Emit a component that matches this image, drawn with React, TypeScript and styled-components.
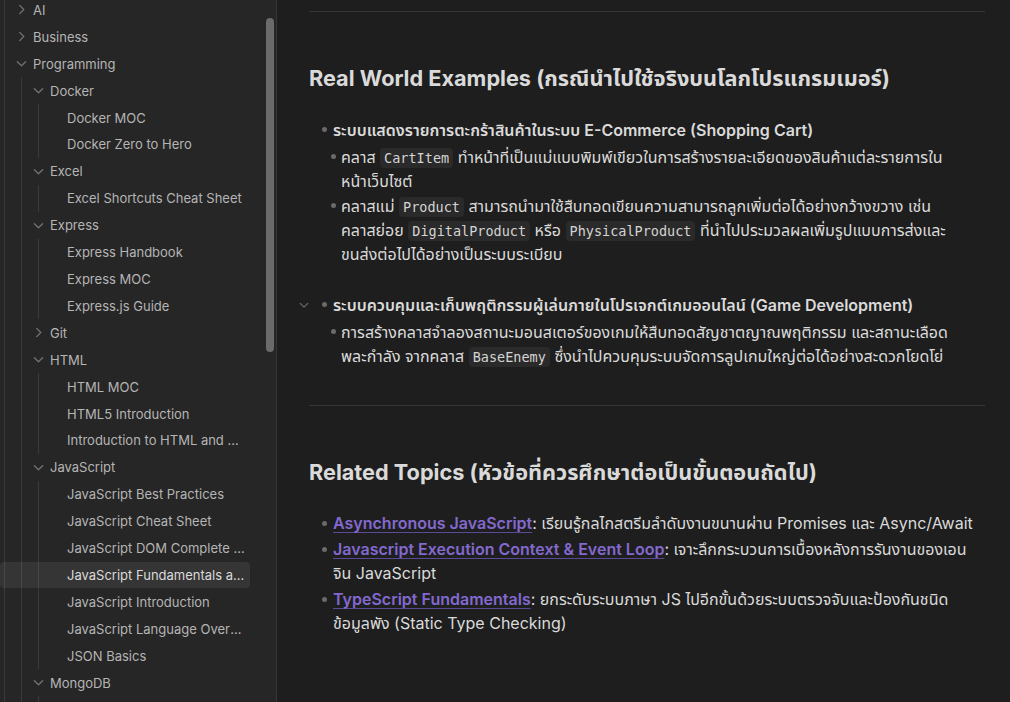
import React from "react";
import styled, { createGlobalStyle } from "styled-components";

const GlobalStyle = createGlobalStyle`
  * { box-sizing: border-box; }
  html, body, #root { margin: 0; height: 100%; }
  body {
    background: #1e1e1e;
    font-family: Inter, "Noto Sans Thai", "Noto Sans", "DejaVu Sans", sans-serif;
    -webkit-font-smoothing: antialiased;
  }
`;

const Layout = styled.div`
  display: flex;
  height: 702px;
  overflow: hidden;
`;

/* ---------- sidebar ---------- */

const Sidebar = styled.aside`
  position: relative;
  width: 277px;
  flex-shrink: 0;
  background: #262626;
  border-right: 1px solid #363636;
  overflow: hidden;
`;

const Tree = styled.div`
  margin-top: -3.5px;
  padding-right: 26px;
`;

const Group = styled.div<{ $root?: boolean }>`
  margin-left: ${(p) => (p.$root ? 4 : 16)}px;
  border-left: 1px solid #3a3a3a;
`;

const Row = styled.div<{ $active?: boolean; $pull: number }>`
  display: flex;
  align-items: center;
  gap: 5px;
  height: 26.92px;
  margin-left: -${(p) => p.$pull}px;
  padding: 0 4px 0 ${(p) => 9 + p.$pull}px;
  border-radius: 4px;
  font-size: 13px;
  white-space: nowrap;
  color: ${(p) => (p.$active ? "#dadada" : "#b5b5b5")};
  background: ${(p) => (p.$active ? "rgba(255, 255, 255, 0.07)" : "transparent")};
`;

const ChevronSlot = styled.span`
  width: 14px;
  flex-shrink: 0;
  display: flex;
  justify-content: center;
  align-items: center;
`;

const Chevron = styled.svg<{ $open?: boolean }>`
  width: 11px;
  height: 11px;
  color: #707070;
  transform: rotate(${(p) => (p.$open ? 0 : -90)}deg);
`;

const Label = styled.span`
  flex: 1;
  min-width: 0;
  overflow: hidden;
  text-overflow: ellipsis;
`;

const ScrollThumb = styled.div`
  position: absolute;
  top: 18px;
  right: 2px;
  width: 8px;
  height: 334px;
  border-radius: 4px;
  background: #6b6b6b;
`;

type TreeNode = { name: string; open?: boolean; active?: boolean; children?: TreeNode[] };

const tree: TreeNode[] = [
  { name: "AI", children: [] },
  { name: "Business", children: [] },
  {
    name: "Programming",
    open: true,
    children: [
      { name: "Docker", open: true, children: [{ name: "Docker MOC" }, { name: "Docker Zero to Hero" }] },
      { name: "Excel", open: true, children: [{ name: "Excel Shortcuts Cheat Sheet" }] },
      {
        name: "Express",
        open: true,
        children: [{ name: "Express Handbook" }, { name: "Express MOC" }, { name: "Express.js Guide" }],
      },
      { name: "Git", children: [] },
      {
        name: "HTML",
        open: true,
        children: [
          { name: "HTML MOC" },
          { name: "HTML5 Introduction" },
          { name: "Introduction to HTML and CSS Basics" },
        ],
      },
      {
        name: "JavaScript",
        open: true,
        children: [
          { name: "JavaScript Best Practices" },
          { name: "JavaScript Cheat Sheet" },
          { name: "JavaScript DOM Complete Guide" },
          { name: "JavaScript Fundamentals and OOP", active: true },
          { name: "JavaScript Introduction" },
          { name: "JavaScript Language Overview" },
          { name: "JSON Basics" },
        ],
      },
      { name: "MongoDB", open: true, children: [{ name: "MongoDB Basics" }, { name: "MongoDB MOC" }] },
    ],
  },
];

function ChevronIcon({ open }: { open?: boolean }) {
  return (
    <Chevron $open={open} viewBox="0 0 24 24" fill="none" stroke="currentColor" strokeWidth={3} strokeLinecap="round" strokeLinejoin="round">
      <path d="M3 8L12 17L21 8" />
    </Chevron>
  );
}

function TreeItem({ node, depth }: { node: TreeNode; depth: number }) {
  const isFolder = !!node.children;
  return (
    <>
      <Row $active={node.active} $pull={node.active ? 5 + depth * 17 : 0}>
        <ChevronSlot>{isFolder && <ChevronIcon open={node.open} />}</ChevronSlot>
        <Label>{node.name}</Label>
      </Row>
      {isFolder && node.open && node.children!.length > 0 && (
        <Group>
          {node.children!.map((c) => (
            <TreeItem key={c.name} node={c} depth={depth + 1} />
          ))}
        </Group>
      )}
    </>
  );
}

/* ---------- note ---------- */

const Main = styled.main`
  flex: 1;
  min-width: 0;
  padding: 0 25px 0 32px;
  color: #dadada;
  font-size: 16px;
  line-height: 24px;
`;

const Rule = styled.hr<{ $top: number }>`
  border: none;
  border-top: 1px solid #363636;
  margin: ${(p) => p.$top}px 0 0;
`;

const Heading = styled.h2`
  margin: 52px 0 25px;
  font-size: 21.7px;
  font-weight: 700;
  line-height: 28.6px;
  color: #dadada;
`;

const List = styled.ul<{ $gap: number }>`
  list-style: none;
  margin: 0;
  padding: 0;
  display: flex;
  flex-direction: column;
  gap: ${(p) => p.$gap}px;
`;

const Item = styled.li`
  display: grid;
  grid-template-columns: 36px 1fr;
  margin-left: -12px;
`;

const Marker = styled.div`
  height: 24px;
  display: flex;
  align-items: center;
  justify-content: space-between;
  padding: 0 6px 0 2px;
`;

const Fold = styled.svg`
  width: 10px;
  height: 10px;
  color: #6a6a6a;
`;

const Dot = styled.span<{ $center?: boolean }>`
  width: 5px;
  height: 5px;
  margin-left: ${(p) => (p.$center ? 0 : "auto")};
  border-radius: 50%;
  background: #6a6a6a;
`;

const ItemTitle = styled.div<{ $strong?: boolean }>`
  font-weight: ${(p) => (p.$strong ? 600 : 400)};
`;

const SubList = styled.ul`
  list-style: none;
  margin: 3px 0 0 -8px;
  padding: 0;
  display: flex;
  flex-direction: column;
  gap: 1px;
`;

const SubItem = styled.li`
  display: grid;
  grid-template-columns: 16px 1fr;
`;

const SubMarker = styled.div`
  height: 24px;
  display: flex;
  align-items: center;
  justify-content: center;
`;

const Code = styled.code`
  font-family: "DejaVu Sans Mono", "Liberation Mono", monospace;
  font-size: 13.5px;
  line-height: 1;
  color: #d4d4d4;
  background: #2a2a2a;
  border-radius: 4px;
  padding: 2px 4px;
`;

const NoteLink = styled.a`
  color: #8369cf;
  font-weight: 600;
  text-decoration: underline;
  text-decoration-color: #5b4a96;
  text-underline-offset: 3px;
`;

function Bullet({ fold }: { fold?: boolean }) {
  return (
    <Marker>
      {fold && (
        <Fold viewBox="0 0 24 24" fill="none" stroke="currentColor" strokeWidth={3} strokeLinecap="round" strokeLinejoin="round">
          <path d="M3 8L12 17L21 8" />
        </Fold>
      )}
      <Dot />
    </Marker>
  );
}

function Sub({ children }: { children: React.ReactNode }) {
  return (
    <SubItem>
      <SubMarker>
        <Dot $center />
      </SubMarker>
      <div>{children}</div>
    </SubItem>
  );
}

export default function App() {
  return (
    <>
      <GlobalStyle />
      <Layout>
        <Sidebar>
          <Tree>
            <Group $root>
              {tree.map((n) => (
                <TreeItem key={n.name} node={n} depth={0} />
              ))}
            </Group>
          </Tree>
          <ScrollThumb />
        </Sidebar>

        <Main>
          <Rule $top={11} />
          <Heading>Real World Examples (กรณีนำไปใช้จริงบนโลกโปรแกรมเมอร์)</Heading>
          <List $gap={27}>
            <Item>
              <Bullet />
              <div>
                <ItemTitle $strong>ระบบแสดงรายการตะกร้าสินค้าในระบบ E-Commerce (Shopping Cart)</ItemTitle>
                <SubList>
                  <Sub>
                    {"คลาส "}<Code>CartItem</Code>{" ทำหน้าที่เป็นแม่แบบพิมพ์เขียวในการสร้างรายละเอียดของสินค้าแต่ละรายการใน"}
                    <br />
                    {"หน้าเว็บไซต์"}
                  </Sub>
                  <Sub>
                    {"คลาสแม่ "}<Code>Product</Code>{" สามารถนำมาใช้สืบทอดเขียนความสามารถลูกเพิ่มต่อได้อย่างกว้างขวาง เช่น"}
                    <br />
                    {"คลาสย่อย "}<Code>DigitalProduct</Code>{" หรือ "}<Code>PhysicalProduct</Code>
                    {" ที่นำไปประมวลผลเพิ่มรูปแบบการส่งและ"}
                    <br />
                    {"ขนส่งต่อไปได้อย่างเป็นระบบระเบียบ"}
                  </Sub>
                </SubList>
              </div>
            </Item>
            <Item>
              <Bullet fold />
              <div>
                <ItemTitle $strong>ระบบควบคุมและเก็บพฤติกรรมผู้เล่นภายในโปรเจกต์เกมออนไลน์ (Game Development)</ItemTitle>
                <SubList>
                  <Sub>
                    {"การสร้างคลาสจำลองสถานะมอนสเตอร์ของเกมให้สืบทอดสัญชาตญาณพฤติกรรม และสถานะเลือด"}
                    <br />
                    {"พละกำลัง จากคลาส "}<Code>BaseEnemy</Code>{" ซึ่งนำไปควบคุมระบบจัดการลูปเกมใหญ่ต่อได้อย่างสะดวกโยดโย่"}
                  </Sub>
                </SubList>
              </div>
            </Item>
          </List>

          <Rule $top={37} />
          <Heading>Related Topics (หัวข้อที่ควรศึกษาต่อเป็นขั้นตอนถัดไป)</Heading>
          <List $gap={2}>
            <Item>
              <Bullet />
              <div>
                <NoteLink>Asynchronous JavaScript</NoteLink>
                {": เรียนรู้กลไกสตรีมลำดับงานขนานผ่าน Promises และ Async/Await"}
              </div>
            </Item>
            <Item>
              <Bullet />
              <div>
                <NoteLink>Javascript Execution Context &amp; Event Loop</NoteLink>
                {": เจาะลึกกระบวนการเบื้องหลังการรันงานของเอน"}
                <br />
                {"จิน JavaScript"}
              </div>
            </Item>
            <Item>
              <Bullet />
              <div>
                <NoteLink>TypeScript Fundamentals</NoteLink>
                {": ยกระดับระบบภาษา JS ไปอีกขั้นด้วยระบบตรวจจับและป้องกันชนิด"}
                <br />
                {"ข้อมูลพัง (Static Type Checking)"}
              </div>
            </Item>
          </List>
        </Main>
      </Layout>
    </>
  );
}
